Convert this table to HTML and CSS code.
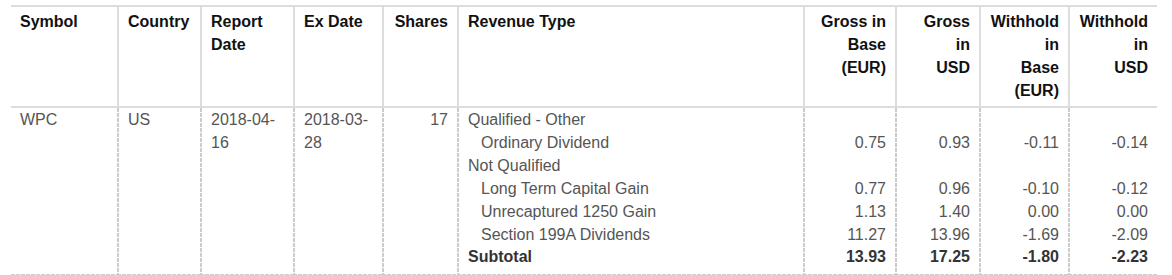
FILE: index.html
```html
<!DOCTYPE html>
<html>
<head>
<meta charset="utf-8">
<link rel="stylesheet" href="styles.css">
</head>
<body>
<table class="report">
  <colgroup>
    <col class="c-symbol"><col class="c-country"><col class="c-report"><col class="c-ex"><col class="c-shares"><col class="c-type"><col class="c-gb"><col class="c-gu"><col class="c-wb"><col class="c-wu">
  </colgroup>
  <thead>
    <tr>
      <th>Symbol</th>
      <th>Country</th>
      <th>Report<br>Date</th>
      <th>Ex Date</th>
      <th class="num">Shares</th>
      <th>Revenue Type</th>
      <th class="num">Gross in<br>Base<br>(EUR)</th>
      <th class="num">Gross<br>in<br>USD</th>
      <th class="num">Withhold<br>in<br>Base<br>(EUR)</th>
      <th class="num">Withhold<br>in<br>USD</th>
    </tr>
  </thead>
  <tbody>
    <tr>
      <td>WPC</td>
      <td>US</td>
      <td>2018-04-16</td>
      <td>2018-03-28</td>
      <td class="num">17</td>
      <td>
        <div class="line">Qualified - Other</div>
        <div class="line sub">Ordinary Dividend</div>
        <div class="line">Not Qualified</div>
        <div class="line sub">Long Term Capital Gain</div>
        <div class="line sub">Unrecaptured 1250 Gain</div>
        <div class="line sub">Section 199A Dividends</div>
        <div class="line total">Subtotal</div>
      </td>
      <td class="num">
        <div class="line">&nbsp;</div>
        <div class="line">0.75</div>
        <div class="line">&nbsp;</div>
        <div class="line">0.77</div>
        <div class="line">1.13</div>
        <div class="line">11.27</div>
        <div class="line total">13.93</div>
      </td>
      <td class="num">
        <div class="line">&nbsp;</div>
        <div class="line">0.93</div>
        <div class="line">&nbsp;</div>
        <div class="line">0.96</div>
        <div class="line">1.40</div>
        <div class="line">13.96</div>
        <div class="line total">17.25</div>
      </td>
      <td class="num">
        <div class="line">&nbsp;</div>
        <div class="line">-0.11</div>
        <div class="line">&nbsp;</div>
        <div class="line">-0.10</div>
        <div class="line">0.00</div>
        <div class="line">-1.69</div>
        <div class="line total">-1.80</div>
      </td>
      <td class="num">
        <div class="line">&nbsp;</div>
        <div class="line">-0.14</div>
        <div class="line">&nbsp;</div>
        <div class="line">-0.12</div>
        <div class="line">0.00</div>
        <div class="line">-2.09</div>
        <div class="line total">-2.23</div>
      </td>
    </tr>
  </tbody>
</table>
</body>
</html>
```
FILE: styles.css
```css
html, body {
  margin: 0;
  padding: 0;
  background: #ffffff;
}

body {
  font-family: "Liberation Sans", Arial, sans-serif;
  font-size: 16px;
  line-height: 1.42857;
  color: #555555;
}

.report {
  margin: 5px 0 0 11px;
  width: 1146px;
  table-layout: fixed;
  border-collapse: separate;
  border-spacing: 0;
  border-top: 2px solid #dddddd;
}

.c-symbol { width: 106px; }
.c-country { width: 83px; }
.c-report { width: 93px; }
.c-ex { width: 89px; }
.c-shares { width: 75px; }
.c-type { width: 346px; }
.c-gb { width: 92px; }
.c-gu { width: 84px; }
.c-wb { width: 89px; }
.c-wu { width: 89px; }

.report th,
.report td {
  vertical-align: top;
  text-align: left;
}

.report th {
  color: #111111;
  font-weight: bold;
  padding: 4px 9px 4px 9px;
  border-bottom: 2px solid #dddddd;
  border-left: 2px solid #dddddd;
}

.report td {
  padding: 1px 9px 4.5px 9px;
  border-bottom: 2px solid transparent;
  border-left: 2px solid transparent;
  background-origin: border-box;
  background-repeat: no-repeat;
  background-image:
    repeating-linear-gradient(to bottom, #cccccc 0, #cccccc 4px, #ffffff 4px, #ffffff 5px),
    repeating-linear-gradient(to right, #cccccc 0, #cccccc 4px, #ffffff 4px, #ffffff 5px);
  background-size: 2px 100%, 100% 2px;
  background-position: left top, left bottom;
}

.report th:first-child {
  border-left: none;
}

.report td:first-child {
  border-left: none;
  background-image:
    repeating-linear-gradient(to right, #cccccc 0, #cccccc 4px, #ffffff 4px, #ffffff 5px);
  background-size: 100% 2px;
  background-position: left bottom;
}

.report .num {
  text-align: right;
}

.line.sub {
  padding-left: 13px;
}

.line.total {
  font-weight: bold;
  color: #333333;
}
```
